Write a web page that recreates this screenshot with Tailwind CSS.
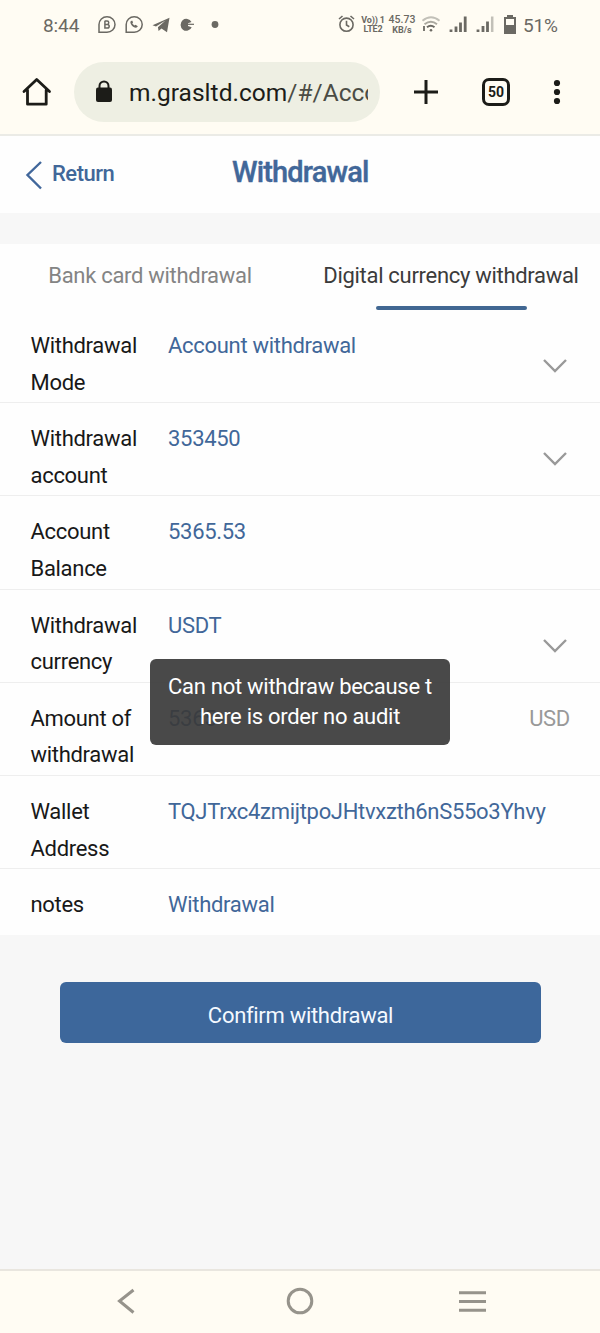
<!DOCTYPE html>
<html lang="en">
<head>
<meta charset="utf-8">
<title>Withdrawal</title>
<script src="https://cdn.jsdelivr.net/npm/@tailwindcss/browser@4"></script>
</head>
<body class="w-[600px] h-[1333px] overflow-hidden bg-[#f7f7f7] font-[Roboto,sans-serif] relative flex flex-col text-[22px]">
<header class="h-[136px] shrink-0 bg-[#fffcf3] border-b-2 border-[#ebebe6]">
  <div class="h-[50px] pl-[43px] flex items-center text-[#6b6963]">
    <span class="w-[55px] text-[19px] pt-[2px] tracking-[-0.1px]">8:44</span>
    <svg class="w-[130px] h-[20px] shrink-0" viewBox="98 15 130 20" fill="none" stroke="#6b6963" stroke-width="1.5">
      <path d="M99 32.300V24.500A8 7.800 0 1 1 107 32.300Z"/>
      <path d="M104.900 21v7h2.500a1.800 1.800 0 0 0 0-3.600h-2.300h2a1.600 1.600 0 0 0 0-3.300h-2.500" stroke-width="1.500"/>
      <path d="M126.200 32.300V24.500A8 7.800 0 1 1 134.200 32.300Z"/>
      <path d="M130.700 21.200c-1.600 2 3 7.500 6 6.400l1.200-1.400-2.400-1.500-1.200.9-2-2.200.8-1.200-1-1.600Z" fill="#6b6963" stroke="none"/>
      <path d="M152.500 25.200L169.500 17.800 167 32.300 161.500 28.600 158.600 31 157.900 27.200 165.500 20.500 156 26.500Z" fill="#6b6963" stroke="none"/>
      <path d="M191.500 22a5.800 6 0 1 0 .2 5.200l-3.700-1.200v-2.800Z" fill="#6b6963" stroke="none"/><path d="M187 24.300h7" stroke-width="1.200"/>
      <circle cx="215" cy="24.500" r="3.400" fill="#6b6963" stroke="none"/>
    </svg>
    <svg class="w-[20px] h-[20px] ml-[109px] shrink-0" viewBox="0 0 20 20" fill="none" stroke="#6b6963" stroke-width="1.600"><circle cx="9.500" cy="9.700" r="6.600"/><path d="M9.500 5.700v4.300l2.800 1.700M2 4l3.500-3M17 4l-3.500-3"/></svg>
    <div class="w-[24px] ml-[4px] text-[9px] leading-[9px] font-bold text-center whitespace-nowrap tracking-[-0.2px]">Vo)) 1<br>LTE2</div>
    <div class="w-[30px] ml-[2px] text-[10.500px] leading-[9.500px] font-medium text-center">45.73<br><span class="text-[9px] font-bold">KB/s</span></div>
    <svg class="w-[78px] h-[20px] ml-[3px] shrink-0" viewBox="421 15 78 20" fill="none" stroke="#6b6963">
      <path d="M423.500 20.700q8.500-7 17 0" stroke="#c2c0b8" stroke-width="1.900"/><path d="M425.500 24.300q6.500-5 12.500 0" stroke="#aaa89f" stroke-width="1.900"/><path d="M428 27.300q3.700-3 7.500 0" stroke-width="2"/>
      <circle cx="432" cy="30.200" r="1.300" fill="#6b6963" stroke="none"/><path d="M425 26v5" stroke-width="1.800"/>
      <path d="M452 29.500v2.500M457 26.500v5.500M461.500 22.500v9.500M466.200 16.500v15.500" stroke-width="2.800"/>
      <path d="M479 29.500v2.500M484 26v6M488.500 21.500v10.500" stroke-width="2.800"/><path d="M493.200 16.500v15.500" stroke="#c2c0b8" stroke-width="2.500"/>
    </svg>
    <svg class="w-[14px] h-[21px] ml-[5px] mb-[2px] shrink-0" viewBox="0 0 14 21"><path d="M4 1h6v2h3v17h-12V3H4Z" fill="#6b6963"/><path d="M3 5h8v6h-8Z" fill="#fffcf3"/></svg>
    <span class="ml-[6px] pt-[2px] text-[19px] tracking-[-0.200px]">51%</span>
  </div>
  <div class="h-[84px] flex items-center">
    <svg class="w-[30px] h-[30px] ml-[22px] shrink-0" viewBox="22 77 30 30" fill="none" stroke="#1c1c18" stroke-width="2.800" stroke-linejoin="round" stroke-linecap="round"><path d="M24 91.500L36.700 79.500 49.500 91.500M27.500 90v14.200h18.700V90"/></svg>
    <div class="w-[306px] h-[60px] ml-[22px] rounded-full bg-[#eeefe3] flex items-center">
      <svg class="w-[18px] h-[24px] ml-[21px] shrink-0" viewBox="0 0 18 24"><path d="M4.500 9V6a4.500 4.500 0 0 1 9 0V9" fill="none" stroke="#1c1c18" stroke-width="2"/><rect x="1" y="7.500" width="16" height="14.500" rx="2" fill="#1c1c18"/></svg>
      <div class="w-[239px] ml-[16px] mt-[2px] overflow-hidden whitespace-nowrap text-[24.500px] leading-[34px] tracking-[0.020px] text-[#1c1c18]">m.grasltd.com<span class="text-[#4b4c45]">/#/Acco</span></div>
    </div>
    <svg class="w-[24px] h-[26px] ml-[34px] shrink-0" viewBox="0 0 24 26" stroke="#1c1c18" stroke-width="3"><path d="M0 13h24M12 1v24"/></svg>
    <div class="w-[28px] h-[28px] ml-[44px] border-[3px] border-[#1c1c18] rounded-[7px] flex items-center justify-center text-[14px] font-bold text-[#1c1c18]">50</div>
    <svg class="w-[8px] h-[26px] ml-[43px]" viewBox="0 0 8 26" fill="#1c1c18"><circle cx="4" cy="4" r="3.100"/><circle cx="4" cy="13" r="3.100"/><circle cx="4" cy="22" r="3.100"/></svg>
  </div>
</header>
<div class="h-[77px] shrink-0 bg-[#fefefe] flex items-center text-[#416799]">
  <svg class="w-[18px] h-[30px] ml-[25px] mt-[1px]" viewBox="0 0 18 30" fill="none" stroke="#41679b" stroke-width="2.400"><path d="M16 2L2.500 15 16 28.500"/></svg>
  <span class="w-[180px] ml-[9px] mb-[2px] text-[22px] font-medium tracking-[-0.500px]">Return</span>
  <h1 class="text-[29px] mb-[3px] font-medium tracking-[-0.850px] [-webkit-text-stroke:0.4px_#416799]">Withdrawal</h1>
</div>
<main class="mt-[31px] h-[691px] shrink-0 bg-[#fefefe] text-[#416799] tracking-[-0.300px]">
  <nav class="h-[66px] grid grid-cols-2 text-center leading-[64px] whitespace-nowrap">
    <span class="text-[#848484]">Bank card withdrawal</span>
    <div class="text-[#3b3b3b] flex flex-col items-center pl-[2px]"><span>Digital currency withdrawal</span><i class="w-[151px] h-[4px] -mt-[2px] rounded-full bg-[#416792]"></i></div>
  </nav>
  <div class="h-[93.200px] flex pl-[30.500px] pt-[18px] border-b border-[#eee] leading-[36.600px]"><div class="w-[137.500px] text-[#181818]">Withdrawal<br>Mode</div><div>Account withdrawal</div><svg class="w-[24px] h-[14px] ml-auto mr-[33px] mt-[31px]" viewBox="0 0 24 14" fill="none" stroke="#999" stroke-width="2.400"><path d="M1 1l11 11L23 1"/></svg></div>
  <div class="h-[93.200px] flex pl-[30.500px] pt-[18px] border-b border-[#eee] leading-[36.600px]"><div class="w-[137.500px] text-[#181818]">Withdrawal<br>account</div><div>353450</div><svg class="w-[24px] h-[14px] ml-auto mr-[33px] mt-[31px]" viewBox="0 0 24 14" fill="none" stroke="#999" stroke-width="2.400"><path d="M1 1l11 11L23 1"/></svg></div>
  <div class="h-[93.200px] flex pl-[30.500px] pt-[18px] border-b border-[#eee] leading-[36.600px]"><div class="w-[137.500px] text-[#181818]">Account<br>Balance</div><div>5365.53</div></div>
  <div class="h-[93.200px] flex pl-[30.500px] pt-[18px] border-b border-[#eee] leading-[36.600px]"><div class="w-[137.500px] text-[#181818]">Withdrawal<br>currency</div><div>USDT</div><svg class="w-[24px] h-[14px] ml-auto mr-[33px] mt-[31px]" viewBox="0 0 24 14" fill="none" stroke="#999" stroke-width="2.400"><path d="M1 1l11 11L23 1"/></svg></div>
  <div class="h-[93.200px] flex pl-[30.500px] pt-[18px] border-b border-[#eee] leading-[36.600px]"><div class="w-[137.500px] text-[#181818]">Amount of<br>withdrawal</div><div>5365</div><div class="ml-auto mr-[30px] text-[#999]">USD</div></div>
  <div class="h-[93.200px] flex pl-[30.500px] pt-[18px] border-b border-[#eee] leading-[36.600px]"><div class="w-[137.500px] text-[#181818]">Wallet<br>Address</div><div>TQJTrxc4zmijtpoJHtvxzth6nS55o3Yhvy</div></div>
  <div class="flex pl-[30.500px] pt-[18px] leading-[36.600px]"><div class="w-[137.500px] text-[#181818]">notes</div><div>Withdrawal</div></div>
</main>
<button class="w-[481px] h-[61px] shrink-0 mt-[47px] ml-[60px] rounded-[6px] bg-[#3d679b] text-[#f4f9ff] pt-[5px] tracking-[-0.300px]">Confirm withdrawal</button>
<footer class="mt-auto h-[64px] shrink-0 border-t-2 border-[#e9e6df] bg-[#fffcf3] flex items-center">
  <svg class="w-full h-[62px]" viewBox="0 1271 600 62" fill="none" stroke="#96938b" stroke-width="3"><path d="M133.500 1290L119.500 1301 133.500 1312.500"/><circle cx="300" cy="1301" r="11.800"/><path d="M459 1292.800h27M459 1301.500h27M459 1310.200h27"/></svg>
</footer>
<div class="absolute left-[150px] top-[659px] w-[300px] h-[86px] rounded-[6px] bg-[#3a3a3a]/92 text-white text-center leading-[30.500px] pt-[12.500px] tracking-[-0.280px] whitespace-nowrap">Can not withdraw because t<br>here is order no audit</div>
</body>
</html>
